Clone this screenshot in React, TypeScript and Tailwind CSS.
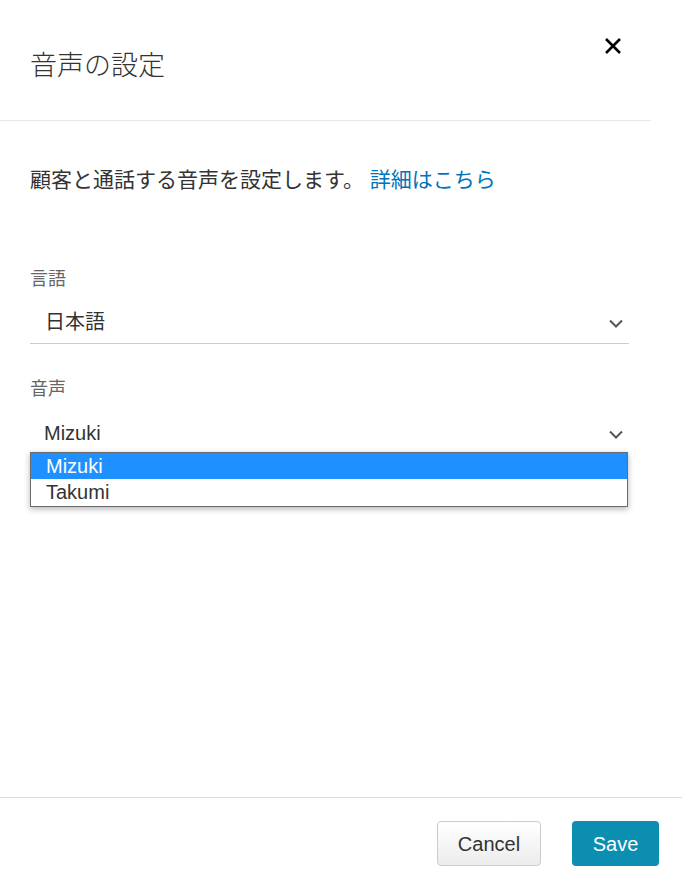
import React from 'react';

const font = "font-['Liberation_Sans','Noto_Sans_CJK_JP',sans-serif]";

function Chevron() {
  return (
    <svg width="14" height="9" viewBox="0 0 14 9" fill="none" className="shrink-0">
      <path d="M1 1.5L7 7.5L13 1.5" stroke="#555" strokeWidth="2" />
    </svg>
  );
}

export default function App() {
  return (
    <div className={`w-[682px] h-[880px] bg-white flex flex-col text-[#333] ${font}`}>
      {/* Header */}
      <div className="h-[121px] mr-[31px] border-b border-[#e8e8e8] flex justify-between pl-[30px] pr-[28px]">
        <h1 className="mt-[49px] text-[27px] leading-[34px] font-light text-[#333]">音声の設定</h1>
        <button type="button" className="mt-[36px] w-[20px] h-[20px] flex items-center justify-center">
          <svg width="18" height="18" viewBox="0 0 18 18">
            <path d="M2 2L16 16M16 2L2 16" stroke="#000" strokeWidth="2.6" />
          </svg>
        </button>
      </div>

      {/* Body */}
      <div className="flex-1 px-[30px]">
        <p className="mt-[46px] text-[21px] leading-[26px] text-[#333]">
          顧客と通話する音声を設定します。 <span className="text-[#0073bb]">詳細はこちら</span>
        </p>

        {/* Language */}
        <div className="mt-[75px] w-[599px]">
          <div className="text-[18px] leading-[22px] text-[#666]">言語</div>
          <div className="mt-[20px] h-[34px] flex items-center justify-between pl-[15px] pr-[6px] border-b border-[#ccc]">
            <span className="text-[20px] leading-[24px] text-[#333] -mt-[9px]">日本語</span>
            <span className="-mt-[6px]"><Chevron /></span>
          </div>
        </div>

        {/* Voice */}
        <div className="mt-[34px] w-[599px] relative">
          <div className="text-[18px] leading-[22px] text-[#666]">音声</div>
          <div className="mt-[20px] h-[34px] flex items-center justify-between pl-[14px] pr-[6px]">
            <span className="text-[20px] leading-[24px] text-[#333] -mt-[9px]">Mizuki</span>
            <span className="-mt-[6px]"><Chevron /></span>
          </div>
          <ul className="absolute left-0 top-[74px] w-[598px] border border-[#6b6b6b] bg-white shadow-[0_2px_6px_rgba(0,0,0,0.3)] text-[20px]">
            <li className="h-[26px] leading-[26px] pl-[15px] bg-[#1e90ff] text-white">Mizuki</li>
            <li className="h-[27px] leading-[26px] pl-[15px] text-[#333]">Takumi</li>
          </ul>
        </div>
      </div>

      {/* Footer */}
      <div className="h-[83px] border-t border-[#ddd] flex items-start justify-end gap-[31px] pr-[23px] pt-[23px]">
        <button type="button" className="w-[104px] h-[45px] rounded-[4px] border border-[#ccc] bg-gradient-to-b from-white to-[#ececec] text-[20px] text-[#333]">
          Cancel
        </button>
        <button type="button" className="w-[87px] h-[45px] rounded-[4px] bg-[#0b8eb0] text-[20px] text-white">
          Save
        </button>
      </div>
    </div>
  );
}
